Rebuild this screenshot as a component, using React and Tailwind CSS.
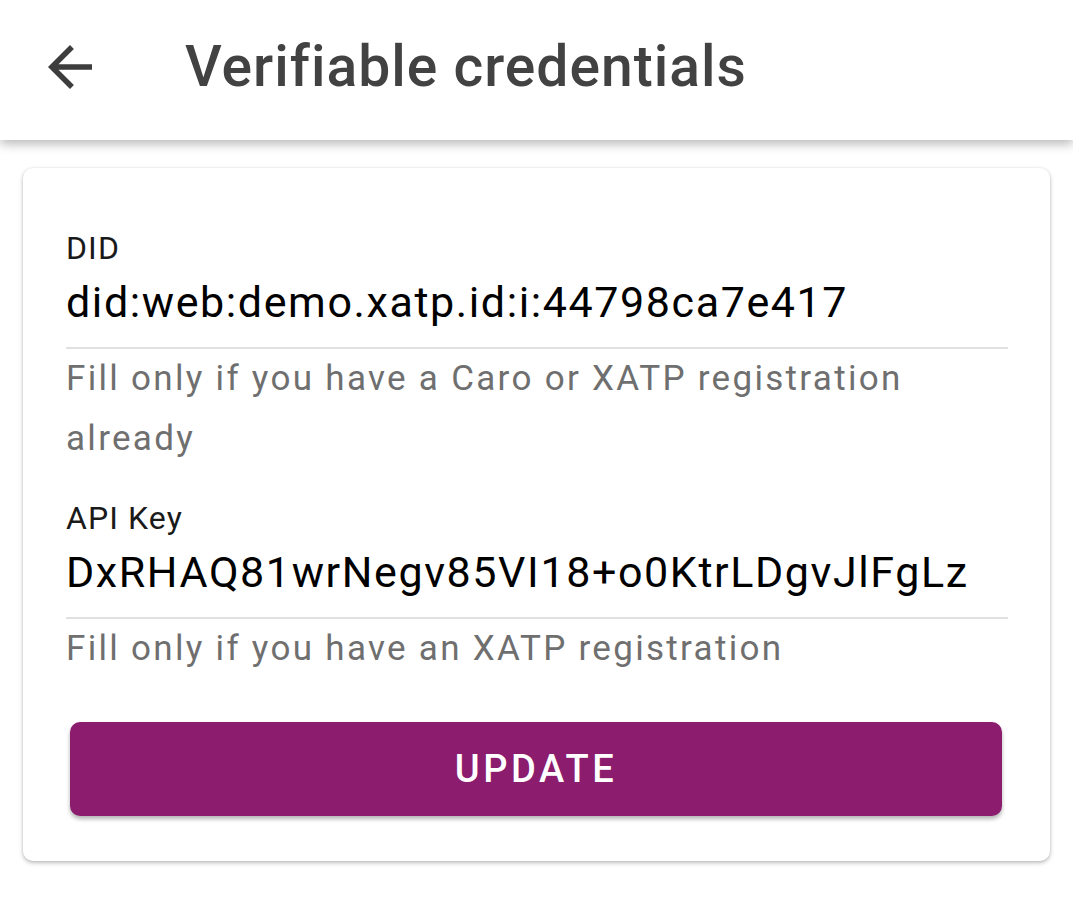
import React from 'react'

const font = { fontFamily: 'Roboto, "Noto Sans", sans-serif' }

function Field({ label, value, helper }) {
  return (
    <div className="flex flex-col">
      <label className="text-[32px] leading-[38px] tracking-[1.1px] text-[#1a1a1a]">{label}</label>
      <div className="mt-[9px] pb-[19px] border-b-2 border-[#e0e0e0] text-[43px] leading-[52px] tracking-[1.6px] text-black whitespace-nowrap overflow-hidden">
        {value}
      </div>
      <p className="pr-[40px] text-[35px] leading-[60px] tracking-[2.3px] text-[#6f6f6f]">{helper}</p>
    </div>
  )
}

export default function App() {
  return (
    <div className="min-h-screen bg-white" style={font}>
      {/* App bar */}
      <header className="h-[140px] pb-[6px] flex items-center bg-white shadow-[0_4px_10px_rgba(0,0,0,0.28)] relative z-10">
        <button className="ml-[37px] w-[66px] h-[66px] flex items-center justify-center text-[#3d3d3d]">
          <svg viewBox="0 0 24 24" className="w-[66px] h-[66px]" fill="currentColor">
            <path d="M20 11H7.83l5.59-5.59L12 4l-8 8 8 8 1.41-1.41L7.83 13H20v-2z" />
          </svg>
        </button>
        <h1 className="ml-[82px] text-[57px] font-medium text-[#424242] tracking-[1px]">Verifiable credentials</h1>
      </header>

      <main className="px-[23px] pt-[28px]">
        <div className="w-[1027px] bg-white rounded-[10px] shadow-[0_2px_4px_rgba(0,0,0,0.25),0_0_3px_rgba(0,0,0,0.08)] pt-[61px] pb-[45px] pl-[43px] pr-[42px]">
          <Field
            label="DID"
            value="did:web:demo.xatp.id:i:44798ca7e417"
            helper="Fill only if you have a Caro or XATP registration already"
          />
          <div className="mt-[30px]">
            <Field
              label="API Key"
              value="DxRHAQ81wrNegv85VI18+o0KtrLDgvJlFgLz"
              helper="Fill only if you have an XATP registration"
            />
          </div>
          <div className="mt-[43px] pl-[4px] pr-[6px]">
            <button className="w-full h-[94px] rounded-[10px] bg-[#8b1c6e] text-white text-[38px] font-medium tracking-[3.6px] shadow-[0_3px_4px_rgba(0,0,0,0.3)]">
              UPDATE
            </button>
          </div>
        </div>
      </main>
    </div>
  )
}
